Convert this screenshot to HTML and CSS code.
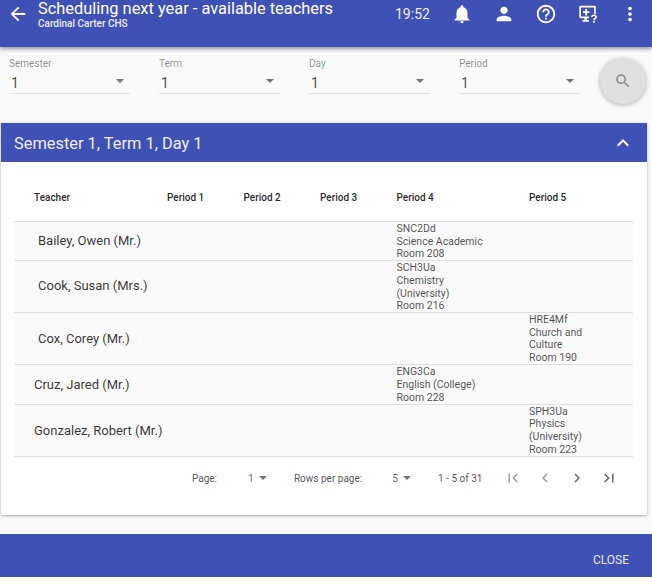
FILE: index.html
```html
<!DOCTYPE html>
<html lang="en">
<head>
    <meta charset="UTF-8">
    <meta name="viewport" content="width=device-width, initial-scale=1.0">
    <title>Scheduling next year - available teachers</title>
    <link rel="stylesheet" href="styles.css">
</head>
<body>

<header class="topbar">
    <svg class="icon back" viewBox="0 0 24 24"><path d="M20 11H7.83l5.59-5.59L12 4l-8 8 8 8 1.41-1.41L7.83 13H20v-2z"/></svg>
    <div class="titles">
        <h1>Scheduling next year - available teachers</h1>
        <p>Cardinal Carter CHS</p>
    </div>
    <span class="clock">19:52</span>
    <div class="actions">
        <svg class="icon" viewBox="0 0 24 24"><path d="M12 22c1.1 0 2-.9 2-2h-4c0 1.1.9 2 2 2zm6-6v-5c0-3.07-1.63-5.64-4.5-6.32V4c0-.83-.67-1.5-1.5-1.5s-1.5.67-1.5 1.5v.68C7.64 5.36 6 7.92 6 11v5l-2 2v1h16v-1l-2-2z"/></svg>
        <svg class="icon" viewBox="0 0 24 24"><path d="M12 12c2.21 0 4-1.79 4-4s-1.79-4-4-4-4 1.79-4 4 1.79 4 4 4zm0 2c-2.67 0-8 1.34-8 4v2h16v-2c0-2.66-5.33-4-8-4z"/></svg>
        <svg class="icon" viewBox="0 0 24 24"><path d="M11 18h2v-2h-2v2zm1-16C6.48 2 2 6.48 2 12s4.48 10 10 10 10-4.48 10-10S17.52 2 12 2zm0 18c-4.41 0-8-3.59-8-8s3.59-8 8-8 8 3.59 8 8-3.59 8-8 8zm0-14c-2.21 0-4 1.79-4 4h2c0-1.1.9-2 2-2s2 .9 2 2c0 2-3 1.75-3 5h2c0-2.25 3-2.5 3-5 0-2.21-1.79-4-4-4z"/></svg>
        <svg class="icon" viewBox="0 0 24 24"><path d="M4 3h15a1.5 1.5 0 0 1 1.5 1.5V12h-1.8V4.8H4.3v10H13v1.8H4A1.5 1.5 0 0 1 2.5 15V4.5A1.5 1.5 0 0 1 4 3z"/><path d="M9 6.5h2V9h2.5v2H11v2.5H9V11H6.5V9H9z"/><path d="M8 16.6h3v2h2v1.8H6v-1.8h2z"/><path d="M18.5 12.6c-1.8 0-3.2 1.2-3.2 2.8h1.9c0-.6.5-1.1 1.3-1.1s1.3.4 1.3 1.1c0 1.1-2.2 1.3-2.2 3.4h1.9c0-1.4 2.2-1.7 2.2-3.5 0-1.6-1.4-2.7-3.2-2.7zM17.6 19.6h1.9v1.9h-1.9z"/></svg>
        <svg class="icon" viewBox="0 0 24 24"><path d="M12 8c1.1 0 2-.9 2-2s-.9-2-2-2-2 .9-2 2 .9 2 2 2zm0 2c-1.1 0-2 .9-2 2s.9 2 2 2 2-.9 2-2-.9-2-2-2zm0 6c-1.1 0-2 .9-2 2s.9 2 2 2 2-.9 2-2-.9-2-2-2z"/></svg>
    </div>
</header>

<section class="filters">
    <div class="field">
        <label>Semester</label>
        <div class="select"><span>1</span><i class="caret"></i></div>
    </div>
    <div class="field">
        <label>Term</label>
        <div class="select"><span>1</span><i class="caret"></i></div>
    </div>
    <div class="field">
        <label>Day</label>
        <div class="select"><span>1</span><i class="caret"></i></div>
    </div>
    <div class="field">
        <label>Period</label>
        <div class="select"><span>1</span><i class="caret"></i></div>
    </div>
    <button class="fab" type="button">
        <svg class="icon" viewBox="0 0 24 24"><path d="M15.5 14h-.79l-.28-.27C15.41 12.59 16 11.11 16 9.5 16 5.91 13.09 3 9.5 3S3 5.91 3 9.5 5.91 16 9.5 16c1.61 0 3.09-.59 4.23-1.57l.27.28v.79l5 4.99L20.49 19l-4.99-5zm-6 0C7.01 14 5 11.99 5 9.5S7.01 5 9.5 5 14 7.01 14 9.5 11.99 14 9.5 14z"/></svg>
    </button>
</section>

<section class="panel">
    <div class="panel-head">
        <h2>Semester 1, Term 1, Day 1</h2>
        <svg class="icon" viewBox="0 0 24 24"><path d="M12 8l-6 6 1.41 1.41L12 10.83l4.59 4.58L18 14z"/></svg>
    </div>
    <div class="panel-body">
        <table class="grid">
            <thead>
                <tr>
                    <th class="col-teacher">Teacher</th>
                    <th class="col-period">Period 1</th>
                    <th class="col-period">Period 2</th>
                    <th class="col-period">Period 3</th>
                    <th class="col-wide">Period 4</th>
                    <th>Period 5</th>
                </tr>
            </thead>
            <tbody>
                <tr>
                    <td class="name indent">Bailey, Owen (Mr.)</td>
                    <td></td><td></td><td></td>
                    <td><div class="course">SNC2Dd<br>Science Academic<br>Room 208</div></td>
                    <td></td>
                </tr>
                <tr>
                    <td class="name indent">Cook, Susan (Mrs.)</td>
                    <td></td><td></td><td></td>
                    <td><div class="course">SCH3Ua<br>Chemistry<br>(University)<br>Room 216</div></td>
                    <td></td>
                </tr>
                <tr>
                    <td class="name indent low">Cox, Corey (Mr.)</td>
                    <td></td><td></td><td></td>
                    <td></td>
                    <td><div class="course">HRE4Mf<br>Church and<br>Culture<br>Room 190</div></td>
                </tr>
                <tr class="tall">
                    <td class="name low">Cruz, Jared (Mr.)</td>
                    <td></td><td></td><td></td>
                    <td><div class="course">ENG3Ca<br>English (College)<br>Room 228</div></td>
                    <td></td>
                </tr>
                <tr>
                    <td class="name low">Gonzalez, Robert (Mr.)</td>
                    <td></td><td></td><td></td>
                    <td></td>
                    <td><div class="course">SPH3Ua<br>Physics<br>(University)<br>Room 223</div></td>
                </tr>
            </tbody>
        </table>
        <div class="pager">
            <span class="pager-label">Page:</span>
            <span class="pager-pick page-pick">1<i class="caret"></i></span>
            <span class="pager-label">Rows per page:</span>
            <span class="pager-pick rows-pick">5<i class="caret"></i></span>
            <span class="pager-count">1 - 5 of 31</span>
            <div class="pager-nav">
                <svg class="icon" viewBox="0 0 24 24"><path d="M18.41 16.59L13.82 12l4.59-4.59L17 6l-6 6 6 6zM6 6h2v12H6z"/></svg>
                <svg class="icon" viewBox="0 0 24 24"><path d="M15.41 7.41L14 6l-6 6 6 6 1.41-1.41L10.83 12z"/></svg>
                <svg class="icon on" viewBox="0 0 24 24"><path d="M10 6L8.59 7.41 13.17 12l-4.58 4.59L10 18l6-6z"/></svg>
                <svg class="icon on" viewBox="0 0 24 24"><path d="M5.59 7.41L10.18 12l-4.59 4.59L7 18l6-6-6-6zM16 6h2v12h-2z"/></svg>
            </div>
        </div>
    </div>
</section>

<footer class="bottombar">
    <a class="close">CLOSE</a>
</footer>

</body>
</html>
```

FILE: styles.css
```css
html {
    background-color: #fff;
}
body {
    font-family: Roboto, Arial, sans-serif;
    margin: 0;
    padding: 0;
    width: 652px;
    height: 577px;
    background-color: #fafafa;
    color: rgba(0, 0, 0, 0.87);
    overflow: hidden;
    display: flex;
    flex-direction: column;
}
.icon {
    display: block;
    width: 24px;
    height: 24px;
    fill: currentColor;
    flex: none;
}

/* top bar */
.topbar {
    background-color: #3f51b5;
    color: #fff;
    height: 47px;
    flex: none;
    display: flex;
    align-items: flex-start;
    box-shadow: 0 2px 4px rgba(0, 0, 0, 0.4);
    position: relative;
}
.topbar .icon {
    width: 22px;
    height: 22px;
}
.topbar .back {
    margin: 3px 0 0 7px;
}
.titles {
    margin-left: 9px;
    width: 357px;
}
.titles h1 {
    margin: 0;
    font-size: 16.4px;
    line-height: 17px;
    font-weight: 400;
    white-space: nowrap;
}
.titles p {
    margin: 1px 0 0;
    font-size: 10px;
    line-height: 12px;
    font-weight: 500;
    opacity: 0.9;
}
.clock {
    font-size: 14px;
    line-height: 28px;
    width: 46px;
    opacity: 0.9;
}
.actions {
    display: flex;
    gap: 20px;
    margin: 3px 0 0 10px;
}

/* filters */
.filters {
    height: 76px;
    flex: none;
    display: flex;
    align-items: flex-start;
    padding: 0 0 0 9px;
    gap: 29px;
}
.field {
    width: 121px;
    padding-top: 10px;
}
.field label {
    display: block;
    font-size: 10px;
    line-height: 13px;
    color: rgba(0, 0, 0, 0.45);
}
.select {
    display: flex;
    justify-content: space-between;
    align-items: center;
    height: 21px;
    padding: 2px 6px 0 2px;
    border-bottom: 1px solid #e0e0e0;
    font-size: 14px;
    color: rgba(0, 0, 0, 0.7);
}
.caret {
    display: block;
    width: 0;
    height: 0;
    border-left: 4px solid transparent;
    border-right: 4px solid transparent;
    border-top: 4px solid #757575;
}
.select .caret {
    margin-top: -3px;
}
.fab {
    width: 46px;
    height: 46px;
    margin: 11px 0 0 -9px;
    padding: 14px;
    border: 0;
    border-radius: 50%;
    background-color: #e0e0e0;
    color: #8a8a8a;
    box-shadow: 0 1px 5px rgba(0, 0, 0, 0.3);
}
.fab .icon {
    width: 18px;
    height: 18px;
}

/* results panel */
.panel {
    margin-left: 1px;
    width: 646px;
    height: 392px;
    flex: none;
    background-color: #fff;
    display: flex;
    flex-direction: column;
    box-shadow: 0 1px 3px rgba(0, 0, 0, 0.35);
    border-radius: 0 0 2px 2px;
}
.panel-head {
    background-color: #3f51b5;
    color: #fff;
    height: 38px;
    flex: none;
    display: flex;
    align-items: center;
    justify-content: space-between;
    padding: 1px 12px 0 13px;
}
.panel-head h2 {
    margin: 0;
    font-size: 16.4px;
    font-weight: 400;
    opacity: 0.9;
}
.panel-body {
    padding: 0 13px;
}
.grid {
    width: 619px;
    table-layout: fixed;
    border-collapse: collapse;
    font-size: 10.5px;
    line-height: 12.7px;
}
.grid th {
    height: 45px;
    padding: 14px 0 0;
    text-align: left;
    font-size: 10px;
    font-weight: 500;
    border-bottom: 1px solid #e0e0e0;
}
.grid th.col-teacher {
    width: 133px;
    padding-left: 20px;
}
.grid th.col-period {
    width: 76.5px;
}
.grid th.col-wide {
    width: 132.5px;
}
.grid td {
    padding: 0;
    background-color: #fafafa;
    border-bottom: 1px solid #e0e0e0;
    color: rgba(0, 0, 0, 0.7);
    vertical-align: middle;
}
.grid td.name {
    padding-left: 20px;
    font-size: 13px;
    white-space: nowrap;
    color: rgba(0, 0, 0, 0.8);
}
.grid td.indent {
    padding-left: 24px;
}
.grid td.low {
    padding-top: 3px;
}
.grid .tall td {
    box-sizing: border-box;
    height: 40px;
}
.course {
    margin: 1px 0 -1px;
}

/* pager */
.pager {
    height: 43px;
    display: flex;
    align-items: center;
    font-size: 10px;
    color: rgba(0, 0, 0, 0.7);
}
.pager-label:first-child {
    margin-left: 178px;
}
.pager-pick {
    display: flex;
    align-items: center;
    gap: 5px;
    font-size: 10.5px;
    color: rgba(0, 0, 0, 0.6);
}
.pager-pick .caret {
    border-left-width: 4.5px;
    border-right-width: 4.5px;
}
.page-pick {
    margin: 0 27px 0 31px;
}
.rows-pick {
    margin: 0 27px 0 30px;
}
.pager-nav {
    display: flex;
    gap: 14px;
    margin-left: 22px;
    color: rgba(0, 0, 0, 0.38);
}
.pager-nav .icon {
    width: 18px;
    height: 18px;
}
.pager-nav .on {
    color: rgba(0, 0, 0, 0.6);
}

/* bottom bar */
.bottombar {
    margin-top: 19px;
    flex: none;
    height: 43px;
    background-color: #3f51b5;
    display: flex;
    align-items: center;
    justify-content: flex-end;
    padding-right: 23px;
}
.close {
    color: #fff;
    font-size: 12px;
    font-weight: 400;
    opacity: 0.85;
    padding-top: 8px;
}
```
